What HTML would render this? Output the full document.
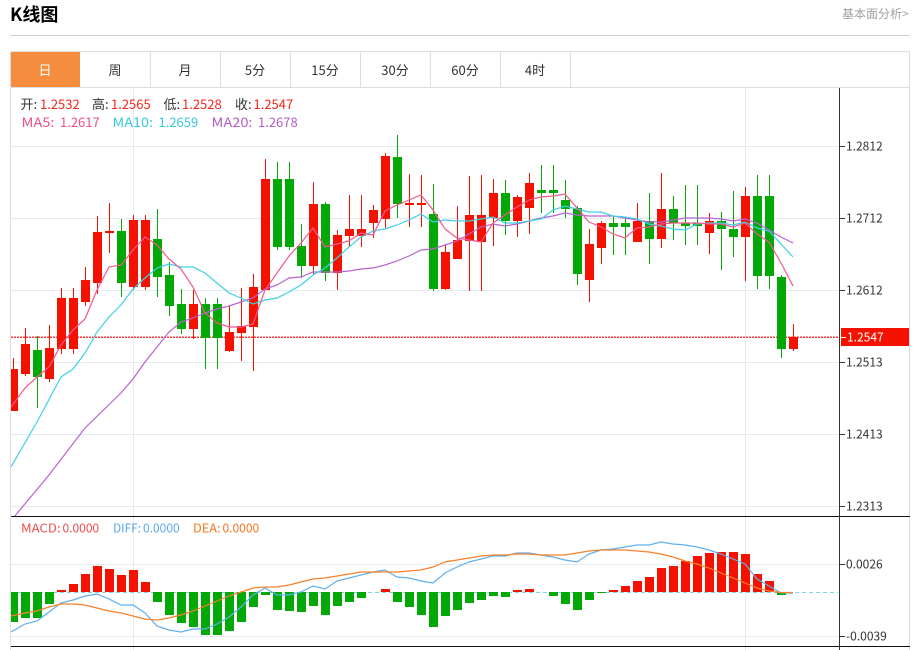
<!DOCTYPE html>
<html lang="zh">
<head>
<meta charset="utf-8">
<title>K线图</title>
<style>
html,body{margin:0;padding:0;background:#fff;width:920px;height:650px;overflow:hidden}
svg{display:block;font-family:"Noto Sans CJK SC","Liberation Sans",sans-serif}
</style>
</head>
<body>
<svg width="920" height="650" viewBox="0 0 920 650" xmlns="http://www.w3.org/2000/svg">
<defs><clipPath id="c"><rect x="11" y="88" width="828" height="562"/></clipPath></defs>

<text x="10" y="21" font-size="18" font-weight="700" fill="#000">K线图</text>
<text x="842" y="18" font-size="12" fill="#a0a0a0">基本面分析&gt;</text>

<g shape-rendering="crispEdges">
<rect x="10" y="35" width="900" height="1" fill="#d2d2d2"/>
<rect x="10" y="51" width="900" height="1" fill="#dedede"/>
<rect x="10" y="87" width="900" height="1" fill="#dedede"/>
<rect x="10" y="51" width="1" height="599" fill="#dedede"/>
<rect x="909" y="51" width="1" height="599" fill="#dedede"/>
<path d="M150.5 52V87M220.5 52V87M290.5 52V87M360.5 52V87M430.5 52V87M500.5 52V87M570.5 52V87" stroke="#dedede" fill="none"/>
<rect x="11" y="52" width="69" height="35" rx="1" fill="#f58c3e"/>
<path d="M11 146.5H839M11 218.5H839M11 290.5H839M11 362.5H839M11 434.5H839M11 506.5H839M11 564.5H839M11 636.5H839M133.5 88V650M745.5 88V650" stroke="#e3ebf1" fill="none"/>
</g>

<g font-size="13" fill="#333" text-anchor="middle">
<text x="45" y="75" fill="#fff">日</text>
<text x="115" y="75">周</text>
<text x="185" y="75">月</text>
<text x="255" y="75">5分</text>
<text x="325" y="75">15分</text>
<text x="395" y="75">30分</text>
<text x="465" y="75">60分</text>
<text x="535" y="75">4时</text>
</g>

<path clip-path="url(#c)" d="M11 337.200H839" stroke="#f33" stroke-width="1.500" stroke-dasharray="2 1" fill="none"/>

<g clip-path="url(#c)">
<path fill="none" stroke="#f51100" d="M13.5 358V411M25.5 328V376M49.5 325V382M61.5 288V354M73.5 288V354M85.5 267V306M97.5 216V294M109.5 203V253M133.5 215V290M145.5 215V290M193.5 290V339M229.5 306V352M241.5 288V361M253.5 274V371M265.5 159V290M313.5 182V275M337.5 230V290M349.5 195V247M361.5 195V247M373.5 205V238M385.5 153V228M409.5 174V227M421.5 175V227M445.5 245V290M457.5 206V259M469.5 176V291M481.5 175V291M493.5 179V246M517.5 195V237M529.5 173V234M589.5 229V302M601.5 221V264M637.5 203V242M661.5 173V248M709.5 213V254M745.5 187V281M793.5 324V351"/>
<path fill="#f51100" shape-rendering="crispEdges" d="M11 369h7V411h-7zM21 344h9V374h-9zM45 348h9V379h-9zM57 298h9V349h-9zM69 298h9V349h-9zM81 280h9V302h-9zM93 232h9V283h-9zM105 231h9V233h-9zM129 220h9V287h-9zM141 220h9V287h-9zM189 304h9V329h-9zM225 332h9V351h-9zM237 326h9V333h-9zM249 287h9V327h-9zM261 179h9V290h-9zM309 204h9V266h-9zM333 235h9V273h-9zM345 229h9V236h-9zM357 229h9V236h-9zM369 210h9V223h-9zM381 156h9V219h-9zM405 203h9V205h-9zM417 203h9V205h-9zM441 252h9V289h-9zM453 240h9V259h-9zM465 215h9V241h-9zM477 215h9V242h-9zM489 193h9V218h-9zM513 197h9V221h-9zM525 183h9V208h-9zM585 244h9V280h-9zM597 223h9V248h-9zM633 221h9V242h-9zM657 209h9V239h-9zM705 221h9V233h-9zM741 196h9V237h-9zM789 337h9V349h-9z"/>
<path fill="none" stroke="#02a805" d="M37.5 336V408M121.5 219V297M157.5 209V297M169.5 262V316M181.5 289V334M205.5 298V369M217.5 298V369M277.5 162V250M289.5 162V250M301.5 224V278M325.5 202V281M397.5 135V218M433.5 184V291M505.5 180V235M541.5 165V213M553.5 165V213M565.5 180V218M577.5 206V285M613.5 216V255M625.5 217V255M649.5 193V264M673.5 196V240M685.5 185V245M697.5 185V245M721.5 212V270M733.5 191V257M757.5 175V289M769.5 175V289M781.5 275V358"/>
<path fill="#02a805" shape-rendering="crispEdges" d="M33 350h9V377h-9zM117 231h9V283h-9zM153 239h9V277h-9zM165 275h9V306h-9zM177 304h9V329h-9zM201 304h9V338h-9zM213 304h9V338h-9zM273 179h9V247h-9zM285 179h9V247h-9zM297 246h9V266h-9zM321 204h9V273h-9zM393 157h9V204h-9zM429 214h9V289h-9zM501 193h9V221h-9zM537 190h9V193h-9zM549 190h9V193h-9zM561 200h9V209h-9zM573 208h9V274h-9zM609 223h9V227h-9zM621 223h9V227h-9zM645 221h9V239h-9zM669 209h9V223h-9zM681 223h9V226h-9zM693 223h9V226h-9zM717 221h9V229h-9zM729 229h9V237h-9zM753 196h9V276h-9zM765 196h9V276h-9zM777 277h9V349h-9z"/>

<polyline fill="none" stroke="#b863cf" stroke-width="1.2" points="14,517 49,475 85,428 121,393 133,379 145,362 157,347 169,332 181,322 193,318 205,313 217,309 229,306 241,302 253,298 265,289 277,285 289,278 301,277 313,272 325,272 337,272 349,271 361,269 373,268 385,265 397,261 409,256 421,250 433,249 445,245 457,241 469,234 481,227 493,224 505,226 517,224 529,221 541,218 553,216 565,213 577,215 589,216 601,216 613,216 625,218 637,220 649,222 661,222 673,220 685,218 697,218 709,218 721,219 733,221 745,219 757,223 769,230 781,237 793,243"/>
<polyline fill="none" stroke="#3fd0e6" stroke-width="1.2" points="11,467 37,422 61,377 73,369 85,353 97,332 109,317 121,305 133,289 145,278 157,268 169,264 181,267 193,267 205,273 217,283 229,293 241,298 253,304 265,300 277,298 289,292 301,285 313,275 325,268 337,258 349,247 361,237 373,231 385,229 397,225 409,220 421,214 433,222 445,220 457,221 469,221 481,219 493,217 505,223 517,223 529,221 541,219 553,210 565,206 577,209 589,212 601,212 613,216 625,217 637,219 649,224 661,226 673,229 685,230 697,224 709,223 721,223 733,225 745,222 757,228 769,231 781,244 793,257"/>
<polyline fill="none" stroke="#f4578f" stroke-width="1.2" points="11,407 25,388 37,377 49,367 61,345 73,330 85,319 97,290 109,267 121,265 133,250 145,237 157,245 169,259 181,269 193,287 205,313 217,323 229,327 241,327 253,324 265,290 277,273 289,256 301,243 313,228 325,247 337,244 349,241 361,233 373,235 385,211 397,205 409,200 421,195 433,210 445,229 457,238 469,240 481,242 493,223 505,215 517,207 529,200 541,197 553,196 565,194 577,208 589,222 601,227 613,234 625,238 637,228 649,227 661,224 673,223 685,223 697,223 709,224 721,224 733,227 745,223 757,234 769,242 781,263 793,286"/>

<path d="M11 592.5H838" stroke="#7fd2ea" stroke-dasharray="4 3" fill="none"/>
<path fill="#f51100" shape-rendering="crispEdges" d="M57 590h9V592h-9zM69 584h9V592h-9zM81 574h9V592h-9zM93 566h9V592h-9zM105 569h9V592h-9zM117 575h9V592h-9zM129 570h9V592h-9zM141 582h9V592h-9zM381 589h9V592h-9zM513 590h9V592h-9zM525 589h9V592h-9zM609 590h9V592h-9zM621 586h9V592h-9zM633 581h9V592h-9zM645 577h9V592h-9zM657 568h9V592h-9zM669 566h9V592h-9zM681 561h9V592h-9zM693 556h9V592h-9zM705 553h9V592h-9zM717 552h9V592h-9zM729 552h9V592h-9zM741 554h9V592h-9zM753 574h9V592h-9zM765 581h9V592h-9z"/>
<path fill="#02a805" shape-rendering="crispEdges" d="M11 592h7V622h-7zM21 592h9V618h-9zM33 592h9V618h-9zM45 592h9V604h-9zM153 592h9V602h-9zM165 592h9V615h-9zM177 592h9V623h-9zM189 592h9V627h-9zM201 592h9V635h-9zM213 592h9V635h-9zM225 592h9V631h-9zM237 592h9V622h-9zM249 592h9V607h-9zM261 592h9V595h-9zM273 592h9V610h-9zM285 592h9V611h-9zM297 592h9V612h-9zM309 592h9V606h-9zM321 592h9V615h-9zM333 592h9V606h-9zM345 592h9V602h-9zM357 592h9V598h-9zM393 592h9V602h-9zM405 592h9V607h-9zM417 592h9V615h-9zM429 592h9V627h-9zM441 592h9V616h-9zM453 592h9V610h-9zM465 592h9V603h-9zM477 592h9V600h-9zM489 592h9V596h-9zM501 592h9V597h-9zM549 592h9V596h-9zM561 592h9V604h-9zM573 592h9V610h-9zM585 592h9V600h-9zM597 592h9V593h-9zM777 592h9V595h-9z"/>
<polyline fill="none" stroke="#5fb0f0" stroke-width="1.2" points="11,632 25,624 37,621 49,612 61,603 73,600 85,596 97,594 109,599 121,605 133,605 145,613 157,626 169,630 181,632 193,629 205,629 217,624 229,617 241,607 253,595 265,588 277,595 289,595 301,592 313,586 325,589 337,581 349,578 361,575 373,572 385,570 397,577 409,578 421,581 433,583 445,573 457,567 469,562 481,559 493,556 505,556 517,553 529,553 541,555 553,557 565,560 577,562 589,554 601,550 613,549 625,547 637,545 649,545 661,542 673,544 685,545 697,547 709,550 721,554 733,559 745,564 757,579 769,586 781,593 793,593"/>
<polyline fill="none" stroke="#f8812a" stroke-width="1.2" points="11,616 25,613 37,611 49,607 61,604 73,604 85,605 97,608 109,611 121,613 133,616 145,619 157,620 169,618 181,615 193,611 205,606 217,601 229,596 241,592 253,588 265,587 277,587 289,585 301,582 313,579 325,578 337,576 349,574 361,572 373,572 385,572 397,572 409,571 421,570 433,567 445,562 457,560 469,558 481,556 493,555 505,555 517,554 529,554 541,555 553,555 565,555 577,553 589,551 601,550 613,550 625,550 637,551 649,552 661,554 673,557 685,561 697,564 709,568 721,573 733,578 745,583 757,588 769,591 781,592.5 793,592.5"/>
</g>

<g shape-rendering="crispEdges">
<rect x="11" y="516" width="899" height="1" fill="#111"/>
<rect x="11" y="646" width="899" height="1" fill="#111"/>
<rect x="839" y="88" width="1" height="562" fill="#333"/>
<path d="M840 146.5H845M840 218.5H845M840 290.5H845M840 362.5H845M840 434.5H845M840 506.5H845M840 564.5H845M840 636.5H845" stroke="#333" fill="none"/>
<rect x="841" y="328" width="68" height="18" fill="#f51100"/>
<rect x="841" y="337" width="5" height="1" fill="#fff"/>
</g>

<g font-size="12" fill="#333">
<text x="846" y="150.500">1.2812</text>
<text x="846" y="222.500">1.2712</text>
<text x="846" y="294.500">1.2612</text>
<text x="846" y="366.500">1.2513</text>
<text x="846" y="438.500">1.2413</text>
<text x="846" y="510.500">1.2313</text>
<text x="846" y="568.500">0.0026</text>
<text x="846" y="640.500">-0.0039</text>
<text x="847" y="341.500" fill="#fff">1.2547</text>
</g>

<g font-size="13">
<text x="20.500" y="109" fill="#333">开:</text><text x="40" y="109" fill="#f5261a">1.2532</text>
<text x="92" y="109" fill="#333">高:</text><text x="111" y="109" fill="#f5261a">1.2565</text>
<text x="163.500" y="109" fill="#333">低:</text><text x="182" y="109" fill="#f5261a">1.2528</text>
<text x="235" y="109" fill="#333">收:</text><text x="253.500" y="109" fill="#f5261a">1.2547</text>
<text x="21.500" y="127" fill="#f0508c" textLength="33" lengthAdjust="spacingAndGlyphs">MA5:</text><text x="60" y="127" fill="#f0508c">1.2617</text>
<text x="112.500" y="127" fill="#36c9e0" textLength="40.500" lengthAdjust="spacingAndGlyphs">MA10:</text><text x="158.500" y="127" fill="#36c9e0">1.2659</text>
<text x="211.500" y="127" fill="#b45cc8" textLength="41" lengthAdjust="spacingAndGlyphs">MA20:</text><text x="258" y="127" fill="#b45cc8">1.2678</text>
</g>
<g font-size="12">
<text x="21" y="532.500" fill="#f14b4b" textLength="39.500" lengthAdjust="spacingAndGlyphs">MACD:</text><text x="62.500" y="532.500" fill="#f14b4b">0.0000</text>
<text x="113" y="532.500" fill="#5aa9ee" textLength="28" lengthAdjust="spacingAndGlyphs">DIFF:</text><text x="143" y="532.500" fill="#5aa9ee">0.0000</text>
<text x="193" y="532.500" fill="#f5761e" textLength="27.500" lengthAdjust="spacingAndGlyphs">DEA:</text><text x="222.500" y="532.500" fill="#f5761e">0.0000</text>
</g>
</svg>
</body>
</html>
